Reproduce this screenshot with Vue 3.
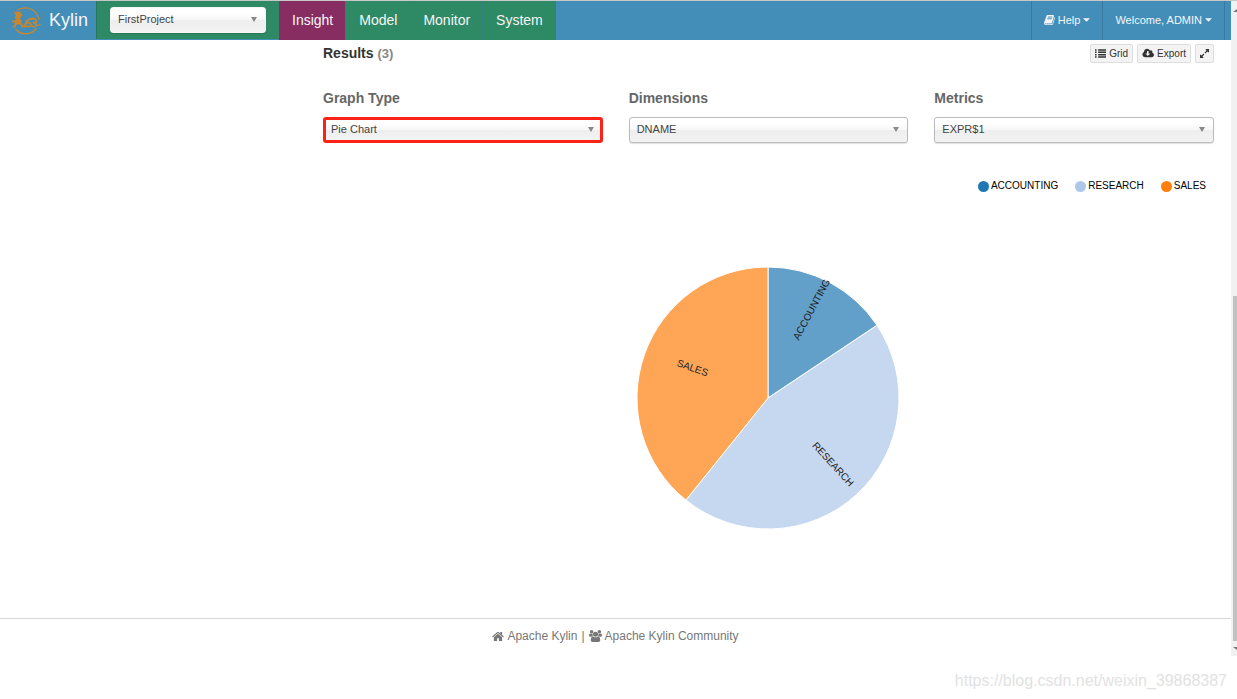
<script setup>
import { ref } from 'vue'

const tabs = [
  { name: 'Insight', active: true },
  { name: 'Model', active: false },
  { name: 'Monitor', active: false },
  { name: 'System', active: false },
]

const project = ref('FirstProject')

const fields = ref([
  { id: 'graph-type', label: 'Graph Type', value: 'Pie Chart', highlighted: true },
  { id: 'dimensions', label: 'Dimensions', value: 'DNAME', highlighted: false },
  { id: 'metrics', label: 'Metrics', value: 'EXPR$1', highlighted: false },
])

const series = [
  { name: 'ACCOUNTING', color: '#1f77b4', start: 0, end: 56.3 },
  { name: 'RESEARCH', color: '#aec7e8', start: 56.3, end: 218.8 },
  { name: 'SALES', color: '#ff7f0e', start: 218.8, end: 360 },
]

const RADIUS = 131
const LABEL_RADIUS = 65

function point(angle, radius) {
  const rad = (angle * Math.PI) / 180
  return [Math.sin(rad) * radius, -Math.cos(rad) * radius]
}

const slices = series.map((s) => {
  const [x1, y1] = point(s.start, RADIUS)
  const [x2, y2] = point(s.end, RADIUS)
  const mid = (s.start + s.end) / 2
  const [lx, ly] = point(mid, LABEL_RADIUS)
  const leftSide = mid > 180
  const large = s.end - s.start > 180 ? 1 : 0
  return {
    ...s,
    path: `M0 0L${x1} ${y1}A${RADIUS} ${RADIUS} 0 ${large} 1 ${x2} ${y2}Z`,
    label: `translate(${lx} ${ly}) rotate(${leftSide ? mid - 270 : mid - 90})`,
    anchor: leftSide ? 'end' : 'start',
  }
})
</script>

<template>
  <div class="page">
    <div class="window">
      <div class="view">
        <header class="navbar">
          <a class="brand" href="#">
            <svg class="logo" viewBox="0 0 30 28" aria-hidden="true">
              <g fill="none" stroke="#c8862f" stroke-linecap="round">
                <path d="M7 2.500Q12 .2 17 1Q26 3 28 12.500" stroke-width="1.200" />
                <path d="M5 22.500Q9 27 15 26.800Q21 26.500 25 22" stroke-width="1.400" />
                <path d="M13.500 19.500L14.500 16.500Q17 12 21 11.500Q26 11.500 25.500 15Q24.500 17 22.500 15.500" stroke-width="1.800" />
                <path d="M15 16.500Q18 15 20 17Q21 19 18.500 19.500H14M20 17.500Q22 20.500 24.500 19.500M24.500 17.500Q26 19.500 29 17.500" stroke-width="1.500" />
              </g>
              <path
                fill="#c8862f"
                d="M4 7L2.500 4.500L5 5.500L6 3.500L7.500 5L10 4L9.500 6L12 8.500L9.500 9L11 10.500L8.500 11L10.500 13.500L10 16L12.500 18.500V20.500H10L10.500 18.500L7.500 17L5 18.500L4.500 20.500H1L3 18.500L4 15.500L.5 16L2 14.500L.5 12.500L3.500 13.500L6 11L3 11L5 9Z"
              />
            </svg>
            <span>Kylin</span>
          </a>
          <div class="project">
            <div class="picker">
              <select v-model="project" aria-label="Project">
                <option>FirstProject</option>
              </select>
              <svg class="arrow" viewBox="0 0 6 5" aria-hidden="true"><path d="M0 0H6L3 5Z" /></svg>
            </div>
          </div>
          <nav class="tabs">
            <a v-for="tab in tabs" :key="tab.name" href="#" :class="{ active: tab.active }">{{ tab.name }}</a>
          </nav>
          <div class="account">
            <button type="button">
              <svg class="book" viewBox="0 0 1664 1792" aria-hidden="true">
                <path
                  d="M1639 478q40 57 18 129l-275 906q-19 64-76.5 107.5t-122.5 43.5h-923q-77 0-148.5-53.5t-99.5-131.5q-24-67-2-127 0-4 3-27t4-37q1-8-3-21.5t-3-19.5q2-11 8-21t16.5-23.5 16.5-23.5q23-38 45-91.5t30-91.5q3-10 .5-30t-.5-28q3-11 17-28t17-23q21-36 42-92t25-90q1-9-2.5-32t.5-28q4-13 22-30.5t22-22.5q19-26 42.5-84.5t27.5-96.5q1-8-3-25.5t-2-26.5q2-8 9-18t18-23 17-21q8-12 16.5-30.5t15-35 16-36 19.5-32 26.5-23.5 36-11.5 47.5 5.5l-1 3q38-9 51-9h761q74 0 114 56t18 130l-274 906q-36 119-71.5 153.5t-128.5 34.5h-869q-27 0-38 15-11 16-1 43 24 70 144 70h923q29 0 56-15.5t35-41.5l300-987q7-22 5-57 38 15 59 43zm-1064 2q-4 13 2 22.5t20 9.5h608q13 0 25.5-9.5t16.5-22.5l21-64q4-13-2-22.5t-20-9.5h-608q-13 0-25.5 9.5t-16.5 22.5zm-83 256q-4 13 2 22.5t20 9.5h608q13 0 25.5-9.5t16.5-22.5l21-64q4-13-2-22.5t-20-9.5h-608q-13 0-25.5 9.5t-16.5 22.5z"
                />
              </svg>
              <span>Help</span>
              <svg class="caret" viewBox="0 0 8 4" aria-hidden="true"><path d="M0 0H8L4 4Z" /></svg>
            </button>
            <button type="button">
              <span>Welcome, ADMIN</span>
              <svg class="caret" viewBox="0 0 8 4" aria-hidden="true"><path d="M0 0H8L4 4Z" /></svg>
            </button>
          </div>
        </header>

        <main class="content">
          <div class="results">
            <h1>Results <span>(3)</span></h1>
            <div class="actions">
              <button type="button">
                <svg class="list" viewBox="0 0 14 11" aria-hidden="true">
                  <path d="M0 0H2V2H0ZM4 0H14V2H4ZM0 3H2V5H0ZM4 3H14V5H4ZM0 6H2V8H0ZM4 6H14V8H4ZM0 9H2V11H0ZM4 9H14V11H4Z" />
                </svg>
                Grid
              </button>
              <button type="button">
                <svg class="cloud" viewBox="0 0 1984 1664" aria-hidden="true">
                  <path
                    d="M1344 928q0-14-9-23t-23-9h-224v-352q0-13-9.5-22.5t-22.5-9.5h-192q-13 0-22.5 9.500t-9.500 22.500v352h-224q-13 0-22.500 9.500t-9.500 22.500q0 14 9 23l352 352q9 9 23 9t23-9l351-351q10-12 10-24zm640 224q0 159-112.500 271.500t-271.500 112.500h-1088q-185 0-316.500-131.500t-131.500-316.500q0-130 70-240t188-165q-2-30-2-43 0-212 150-362t362-150q156 0 285.500 87t188.500 231q71-62 166-62 106 0 181 75t75 181q0 76-41 138 130 31 213.500 135.500t83.500 238.500z"
                  />
                </svg>
                Export
              </button>
              <button type="button" aria-label="Expand">
                <svg class="expand" viewBox="0 128 1536 1536" aria-hidden="true">
                  <path
                    d="M755 1056q0 13-10 23l-332 332 144 144q19 19 19 45t-19 45-45 19h-448q-26 0-45-19t-19-45v-448q0-26 19-45t45-19 45 19l144 144 332-332q10-10 23-10t23 10l114 114q10 10 10 23zm781-864v448q0 26-19 45t-45 19-45-19l-144-144-332 332q-10 10-23 10t-23-10l-114-114q-10-10-10-23t10-23l332-332-144-144q-19-19-19-45t19-45 45-19h448q26 0 45 19t19 45z"
                  />
                </svg>
              </button>
            </div>
          </div>

          <div class="fields">
            <div v-for="field in fields" :key="field.id" class="field">
              <label :for="field.id">{{ field.label }}</label>
              <div class="picker" :class="{ highlighted: field.highlighted }">
                <select :id="field.id" v-model="field.value">
                  <option>{{ field.value }}</option>
                </select>
                <svg class="arrow" viewBox="0 0 6 5" aria-hidden="true"><path d="M0 0H6L3 5Z" /></svg>
              </div>
            </div>
          </div>

          <ul class="legend">
            <li v-for="s in series" :key="s.name">
              <svg viewBox="0 0 11 11" aria-hidden="true"><circle cx="5.500" cy="5.500" r="5.500" :fill="s.color" /></svg>
              {{ s.name }}
            </li>
          </ul>

          <svg class="pie" viewBox="-132 -132 264 264" role="img" aria-label="Pie chart by DNAME">
            <path v-for="s in slices" :key="s.name" class="slice" :d="s.path" :fill="s.color" />
            <text v-for="s in slices" :key="s.name" :transform="s.label" :text-anchor="s.anchor">{{ s.name }}</text>
          </svg>
        </main>

        <footer class="footer">
          <a href="#">
            <svg class="home" viewBox="0 128 1664 1536" aria-hidden="true">
              <path
                d="M1408 992v480q0 26-19 45t-45 19h-384v-384h-256v384h-384q-26 0-45-19t-19-45v-480q0-1 .5-3t.5-3l575-474 575 474q1 2 1 6zm223-69l-62 74q-8 9-21 11h-3q-13 0-21-7l-692-577-692 577q-12 8-24 7-13-2-21-11l-62-74q-8-10-7-23.5t11-21.5l719-599q32-26 76-26t76 26l244 204v-195q0-14 9-23t23-9h192q14 0 23 9t9 23v408l219 182q10 8 11 21.5t-7 23.5z"
              />
            </svg>
            Apache Kylin</a>
          <span>|</span>
          <a href="#">
            <svg class="users" viewBox="0 0 1920 1792" aria-hidden="true">
              <path
                d="M593 896q-162 5-265 128h-134q-82 0-138-40.5t-56-118.5q0-353 124-353 6 0 43.5 21t97.5 42.5 119 21.5q67 0 133-23-5 37-5 66 0 139 81 256zm1071 637q0 120-73 189.5t-194 69.5h-874q-121 0-194-69.5t-73-189.5q0-53 3.5-103.5t14-109 26.5-108.5 43-97.5 62-81 85.5-53.5 111.5-20q10 0 43 21.5t73 48 107 48 135 21.5 135-21.5 107-48 73-48 43-21.5q61 0 111.5 20t85.5 53.5 62 81 43 97.5 26.5 108.5 14 109 3.5 103.5zm-1024-1277q0 106-75 181t-181 75-181-75-75-181 75-181 181-75 181 75 75 181zm704 384q0 159-112.5 271.5t-271.5 112.5-271.5-112.5-112.5-271.5 112.5-271.5 271.5-112.5 271.5 112.5 112.5 271.5zm576 225q0 78-56 118.5t-138 40.5h-134q-103-123-265-128 81-117 81-256 0-29-5-66 66 23 133 23 59 0 119-21.5t97.5-42.5 43.5-21q124 0 124 353zm-128-609q0 106-75 181t-181 75-181-75-75-181 75-181 181-75 181 75 75 181z"
              />
            </svg>
            Apache Kylin Community</a>
        </footer>
      </div>

      <div class="scrollbar" aria-hidden="true">
        <svg viewBox="0 0 4 3"><path d="M0 3L4 0V3Z" /></svg>
        <div class="before"></div>
        <div class="thumb"></div>
        <svg viewBox="0 0 4 3"><path d="M0 0H4V3Z" /></svg>
      </div>
    </div>
    <p class="watermark">https://blog.csdn.net/weixin_39868387</p>
  </div>
</template>

<style>
body {
  background: #fff;
}
</style>

<style scoped>
.page {
  font-family: "Liberation Sans", Arial, sans-serif;
  font-size: 11px;
  color: #333;
  border-top: 1px solid #c8c8c8;
}

.page * {
  box-sizing: border-box;
}

.window {
  display: flex;
}

.view {
  flex: 1;
  min-width: 0;
}

svg {
  display: block;
  flex: none;
  fill: currentColor;
}

a {
  color: inherit;
  text-decoration: none;
}

button {
  font: inherit;
  color: inherit;
  display: flex;
  align-items: center;
}

.navbar {
  display: flex;
  height: 39px;
  background: #438eb9;
  color: #f5f5f5;
}

.brand {
  display: flex;
  align-items: center;
  gap: 8px;
  width: 96px;
  padding-left: 11px;
  font-size: 18px;
}

.logo {
  width: 30px;
  height: 28px;
}

.project {
  display: flex;
  align-items: center;
  height: 38px;
  padding: 0 13px;
  background: #2e8965;
  border-left: 1px solid #2a7760;
}

.project .picker {
  width: 156px;
}

.picker {
  position: relative;
  color: #444;
}

.picker select {
  display: block;
  width: 100%;
  height: 26px;
  padding: 0 20px 2px 7px;
  appearance: none;
  border: 1px solid #bbb;
  border-radius: 3px;
  background: linear-gradient(#fff 20%, #f6f6f6 50%, #eee 52%, #f3f3f3 100%);
  box-shadow: 0 1px 1px rgba(0, 0, 0, 0.12);
  font: inherit;
  color: inherit;
}

.project select {
  border-color: #f5f5f5;
}

.picker.highlighted select {
  border: 3px solid #fb2318;
  padding-left: 5px;
  box-shadow: none;
}

.arrow {
  position: absolute;
  top: 10px;
  right: 9px;
  width: 6px;
  height: 5px;
  color: #888;
  pointer-events: none;
}

.tabs {
  display: flex;
  font-size: 14px;
}

.tabs a {
  display: flex;
  align-items: center;
  padding: 0 12px 2px 13px;
  background: #2e8965;
  border-right: 1px solid #357f83;
}

.tabs a.active {
  background: #872d62;
}

.account {
  display: flex;
  margin-left: auto;
  margin-right: 6px;
  border-right: 1px solid #3978a0;
}

.account button {
  gap: 3px;
  padding: 0 12px 2px;
  border: 0;
  border-left: 1px solid #3978a0;
  background: none;
}

.book {
  width: 11px;
  height: 12px;
}

.caret {
  width: 7px;
  height: 4px;
}

.content {
  display: flex;
  flex-direction: column;
  padding: 3px 17px 88px 323px;
}

.results {
  display: flex;
  justify-content: space-between;
  align-items: center;
  height: 20px;
}

h1 {
  margin: 0;
  font-size: 14px;
}

h1 span {
  color: #888;
  font-size: 13px;
}

.actions {
  display: flex;
  gap: 4px;
  font-size: 10px;
}

.actions button {
  gap: 3px;
  height: 19px;
  padding: 0 4px;
  border: 1px solid #ddd;
  border-radius: 2px;
  background: #f3f3f3;
}

.list {
  width: 11px;
  height: 9px;
}

.cloud {
  width: 12px;
  height: 10px;
}

.expand {
  width: 9px;
  height: 9px;
}

.fields {
  display: grid;
  grid-template-columns: repeat(3, 1fr);
  gap: 26px;
  margin-top: 26px;
}

.field label {
  display: block;
  margin-bottom: 10px;
  font-size: 14px;
  line-height: 18px;
  font-weight: bold;
  color: #666;
}

.legend {
  display: flex;
  justify-content: flex-end;
  gap: 17px;
  margin: 36px 8px 0 0;
  padding: 0;
  list-style: none;
  font-size: 10px;
  line-height: 14px;
  color: #000;
}

.legend li {
  display: flex;
  align-items: center;
  gap: 2px;
}

.legend svg {
  width: 11px;
  height: 11px;
}

.pie {
  align-self: center;
  width: 264px;
  height: 264px;
  margin: 73px 1px 0 0;
  overflow: visible;
}

.slice {
  fill-opacity: 0.7;
  stroke: #fff;
  stroke-width: 1px;
}

.pie text {
  font-size: 10px;
  fill: #222;
}

.footer {
  display: flex;
  justify-content: center;
  align-items: flex-start;
  gap: 4px;
  height: 38px;
  padding-top: 9px;
  border-top: 1px solid #d5d5d5;
  font-size: 12px;
  line-height: 16px;
  color: #777;
}

.footer a {
  display: flex;
  align-items: center;
  gap: 3px;
}

.home {
  width: 12px;
  height: 11px;
}

.users {
  width: 13px;
  height: 12px;
}

.scrollbar {
  display: flex;
  flex-direction: column;
  width: 6px;
  padding: 8px 0 6px 2px;
  background: #f1f1f1;
  color: #777;
}

.scrollbar svg {
  width: 4px;
  height: 3px;
}

.before {
  flex: 284;
}

.thumb {
  flex: 345;
  margin-bottom: 6px;
  background: #c1c1c1;
}

.watermark {
  margin: 15px 10px 0 0;
  text-align: right;
  font-size: 16px;
  line-height: 20px;
  color: #e2e2e2;
}
</style>
